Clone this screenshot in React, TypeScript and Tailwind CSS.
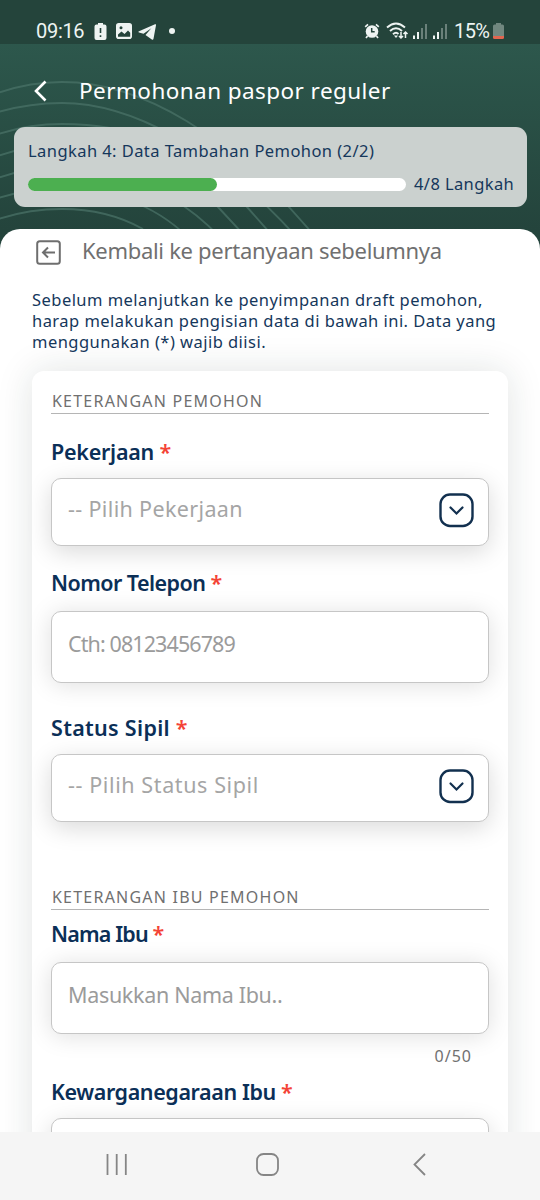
import type { ReactNode } from 'react';

const Header = () => (
  <header className="relative h-[229px] shrink-0 bg-gradient-to-b from-[#2f5c50] to-[#24443c]">
    {/* Contour lines */}
    <svg className="absolute inset-0" width="540" height="260" fill="none" stroke="#4a7267" strokeOpacity="0.75" strokeWidth="1.9">
      <path d="M-5 94Q28 82 62 82C138 82 230 130 326 250" />
      <path d="M-5 113Q28 103 62 103C125 103 215 142 308 250" />
      <path d="M-5 135Q28 124 62 124C120 124 185 138 247 207L285 250" />
      <path d="M-5 157Q28 145 62 145C115 145 168 158 218 207L258 250" />
      <path d="M-5 179Q28 167 62 167C105 167 147 178 185 207Q207 222 232 250" />
      <path d="M-5 199Q28 188 62 188C90 188 118 192 145 207Q176 222 200 250" />
      <path d="M-5 220Q28 209 62 209C90 209 118 215 143 229" />
    </svg>

    {/* Status bar */}
    <div className="relative flex h-11 items-start bg-[#24443b] pt-[19px] pl-9 font-['Roboto'] text-white">
      <span className="w-[50px] text-[20px] leading-6 tracking-[-0.3px] text-[#eef4f2]">09:16</span>
      <svg className="ml-2 mt-1" width="13" height="17" viewBox="0 0 13 17" fill="#eef4f2">
        <path d="M4 0h5v1.500h1.500a2 2 0 0 1 2 2V15a2 2 0 0 1-2 2h-8a2 2 0 0 1-2-2V3.500a2 2 0 0 1 2-2H4z" />
        <path d="M6.500 5v5M6.500 12.200v1.800" stroke="#24443b" strokeWidth="1.6" />
      </svg>
      <svg className="ml-[9px] mt-1" width="16" height="16" viewBox="0 0 16 16">
        <rect x="0.800" y="0.800" width="14.400" height="14.400" rx="2" fill="#eef4f2" stroke="#eef4f2" strokeWidth="1.600" />
        <path d="M2 11.500l3.500-3 3 2.600 3.500-3.600 2.200 2.200v4H2z" fill="#24443b" />
        <circle cx="5" cy="4.800" r="1.500" fill="#24443b" />
      </svg>
      <svg className="ml-[6px] mt-[5px]" width="19" height="17" viewBox="0 0 19 17" fill="#eef4f2">
        <path d="M1 7.300L17 .3c.7-.3 1.200.1 1 .9l-2.500 13.500c-.2 1-.9 1.300-1.700.7L7.500 11 13.300 4.200 5.500 9.800 1 8.500C.2 8.200.3 7.600 1 7.300z" />
      </svg>
      <span className="ml-3 mt-[9px] size-[6px] rounded-full bg-[#eef4f2]" />
      <svg className="ml-[189px] mt-1" width="16" height="16" viewBox="0 0 16 16" fill="#eef4f2">
        <circle cx="8" cy="8.500" r="6.300" />
        <path d="M1.200 3.800L4 1.300M14.800 3.800L12 1.300M3.500 13l-1.500 2M12.500 13l1.500 2" stroke="#eef4f2" strokeWidth="1.700" />
        <path d="M7.700 5v3.800h3" fill="none" stroke="#24443b" strokeWidth="1.500" />
      </svg>
      <svg className="ml-[6px] mt-[3px]" width="23" height="18" viewBox="0 0 23 18" fill="none" stroke="#eef4f2" strokeWidth="1.900">
        <path d="M1 5.500Q10 -2.500 19 5.500M4 9Q10 3.500 16 9M7 12.300Q10 9.500 12.500 12" />
        <path d="M8 13.500l2 2.500 2-2.500z" fill="#eef4f2" stroke="none" />
        <path d="M15 10v6M13 14l2 2 2-2M19.500 16v-6M17.500 12l2-2 2 2" strokeWidth="1.500" />
      </svg>
      <Signal className="ml-[4px]" />
      <Signal className="ml-[6px]" />
      <span className="ml-[7px] w-[37px] text-[20px] leading-6 tracking-[-0.6px] text-[#eef4f2]">15%</span>
      <svg className="ml-[2px] mt-1" width="11" height="16" viewBox="0 0 11 16">
        <path d="M3 0h5v1.500h1.500A1.500 1.500 0 0 1 11 3v10.500H0V3a1.500 1.500 0 0 1 1.500-1.500H3z" fill="#71877f" />
        <path d="M0 13h11v1.500A1.500 1.500 0 0 1 9.500 16h-8A1.500 1.500 0 0 1 0 14.500z" fill="#e0654f" />
      </svg>
    </div>

    <div className="relative flex h-[83px] items-start pt-[33px] pl-[33px]">
      <svg className="mt-[3px]" width="14" height="22" viewBox="0 0 14 22" fill="none" stroke="white" strokeWidth="2.600">
        <path d="M12.500 1.500L3 11l9.500 9.500" />
      </svg>
      <h1 className="ml-8 text-[22.500px] leading-7 tracking-[0.430px] whitespace-nowrap text-white">Permohonan paspor reguler</h1>
    </div>

    {/* Step progress */}
    <div className="relative mr-[13px] ml-3.5 h-20 rounded-[11px] bg-[#cbd1cf] pt-3 pl-3.5 text-[16.500px] text-[#15375b]">
      <p className="leading-6 tracking-[0.430px] whitespace-nowrap">Langkah 4: Data Tambahan Pemohon (2/2)</p>
      <div className="mt-[9px] flex items-center">
        <div className="h-[13px] w-[378px] rounded-full bg-white">
          <div className="h-full w-1/2 rounded-full bg-[#4caf50]" />
        </div>
        <span className="ml-2 leading-6 tracking-[0.400px] whitespace-nowrap">4/8 Langkah</span>
      </div>
    </div>
  </header>
);

const Signal = ({ className }: { className: string }) => (
  <svg className={`${className} mt-[5px]`} width="14" height="15" viewBox="0 0 14 15" fill="#eef4f2">
    <rect x="0" y="11.500" width="2" height="3.500" />
    <rect x="4" y="8" width="2" height="7" />
    <rect x="8" y="4" width="2" height="11" opacity="0.350" />
    <rect x="12" y="0" width="2" height="15" opacity="0.350" />
  </svg>
);

const Section = ({ children }: { children: ReactNode }) => (
  <h2 className="h-[26px] border-b border-[#b5b5b5] pl-px text-[16px] leading-[26px] tracking-[1.220px] whitespace-nowrap text-[#707070]">
    {children}
  </h2>
);

const Label = ({ children, className }: { children: ReactNode; className: string }) => (
  <label className={`${className} block h-7 text-[21.500px] leading-7 font-semibold whitespace-nowrap text-[#0b2f57]`}>
    {children} <span className="text-[#f44336]">*</span>
  </label>
);

const Select = ({ children, className }: { children?: ReactNode; className: string }) => (
  <div className={`${className} flex h-[68px] items-start justify-between rounded-[10px] border border-[#c6c6c6] bg-white pt-4 pr-[14px] pl-4 shadow-[0_6px_24px_rgba(0,0,0,0.15)]`}>
    <span className="text-[21.500px] leading-7 whitespace-nowrap text-[#a5a5a5]">{children}</span>
    <svg className="-mt-[2px]" width="35" height="35" viewBox="0 0 35 35" fill="none" stroke="#12304f">
      <rect x="1.500" y="1.500" width="32" height="31.500" rx="9.500" strokeWidth="2.400" />
      <path d="M11.500 14.500l6 6 6-6" strokeWidth="2.200" strokeLinecap="round" />
    </svg>
  </div>
);

const Input = ({ children, className }: { children: ReactNode; className: string }) => (
  <div className={`${className} h-[72px] rounded-[10px] border border-[#c6c6c6] bg-white pt-[18px] pl-4 text-[21.500px] leading-7 whitespace-nowrap text-[#9b9b9b] shadow-[0_2px_24px_rgba(0,0,0,0.13)]`}>
    {children}
  </div>
);

export default function App() {
  return (
    <div className="flex h-[1200px] w-[540px] flex-col overflow-hidden bg-[#24443c] font-['Noto_Sans',sans-serif]">
      <Header />

      <main className="relative min-h-0 flex-1 overflow-hidden rounded-t-[20px] bg-white">
        <div className="flex h-[60px] items-start pt-[7px] pl-9">
          <svg className="mt-1" width="25" height="25" viewBox="0 0 25 25" fill="none" stroke="#6e6e6e" strokeWidth="2">
            <rect x="1.200" y="1.200" width="22.600" height="22.600" rx="2.500" />
            <path d="M19 12.500H7M12 7.500l-5 5 5 5" />
          </svg>
          <span className="ml-[21px] text-[22px] leading-7 tracking-[-0.300px] whitespace-nowrap text-[#707070]">Kembali ke pertanyaan sebelumnya</span>
        </div>

        <p className="pl-8 text-[16.500px] leading-[21px] tracking-[0.460px] whitespace-nowrap text-[#15375b]">
          Sebelum melanjutkan ke penyimpanan draft pemohon,<br />
          harap melakukan pengisian data di bawah ini. Data yang<br />
          menggunakan (*) wajib diisi.
        </p>

        <div className="mx-8 mt-[19px] h-[900px] rounded-[12px] bg-white px-[19px] pt-[17px] shadow-[0_0_36px_rgba(20,50,40,0.13)]">
          <Section>KETERANGAN PEMOHON</Section>
          <Label className="mt-[24px] tracking-[-0.250px]">Pekerjaan</Label>
          <Select className="mt-3 tracking-[0.350px]">-- Pilih Pekerjaan</Select>
          <Label className="mt-[23px] tracking-[-0.550px]">Nomor Telepon</Label>
          <Input className="mt-[14px] tracking-[-0.900px]">Cth: 08123456789</Input>
          <Label className="mt-[31px] tracking-[0.300px]">Status Sipil</Label>
          <Select className="mt-3 tracking-[0.600px]">-- Pilih Status Sipil</Select>
          <div className="mt-[62px]">
            <Section>KETERANGAN IBU PEMOHON</Section>
          </div>
          <Label className="mt-[10px] tracking-[-0.850px]">Nama Ibu</Label>
          <Input className="mt-[14px] tracking-[-0.320px]">Masukkan Nama Ibu..</Input>
          <p className="mt-2.5 mr-[17px] text-right text-[16px] leading-6 tracking-[1px] text-[#707070]">0/50</p>
          <Label className="mt-[10px] tracking-[-0.400px]">Kewarganegaraan Ibu</Label>
          <Select className="mt-3" />
        </div>
      </main>

      {/* Android navigation */}
      <nav className="relative flex h-[68px] shrink-0 items-start bg-[#f5f5f5] pt-[21px] pl-[106px]">
        <svg width="22" height="23" viewBox="0 0 22 23" stroke="#858585" strokeWidth="1.800">
          <path d="M1.500 1v21M10.700 1v21M19.800 1v21" />
        </svg>
        <svg className="ml-32" width="23" height="23" viewBox="0 0 23 23" fill="none" stroke="#858585" strokeWidth="1.800">
          <rect x="1" y="1" width="21" height="21" rx="6.500" />
        </svg>
        <svg className="ml-[133px]" width="15" height="23" viewBox="0 0 15 23" fill="none" stroke="#858585" strokeWidth="1.800">
          <path d="M13 1L2.500 11.500 13 22" />
        </svg>
      </nav>
    </div>
  );
}
